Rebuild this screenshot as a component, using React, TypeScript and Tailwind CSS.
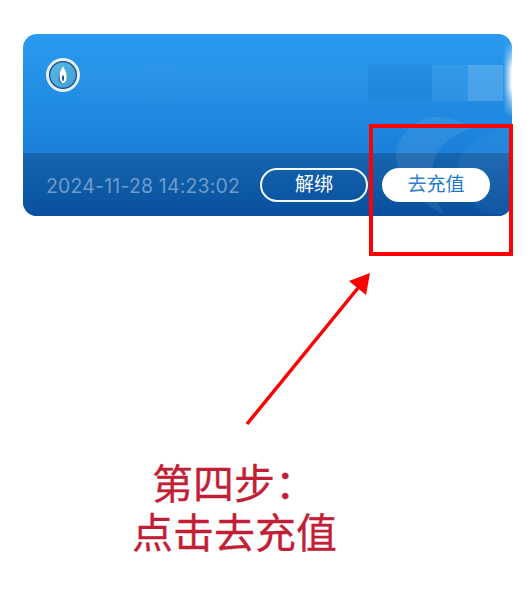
const cjk = "font-['Roboto','Noto_Sans_CJK_SC',sans-serif]";

const mosaic = [
  { w: "w-[65px]", bg: "bg-white/[0.02]" },
  { w: "w-[35px]", bg: "bg-white/[0.03]" },
  { w: "w-[190px]", bg: "bg-white/[0.02]" },
  { w: "w-[64px]", bg: "bg-black/[0.03]" },
  { w: "w-[36px]", bg: "bg-white/[0.06]" },
  { w: "w-[35px]", bg: "bg-white/[0.18]" },
];

const FlameBadge = () => (
  <svg viewBox="0 0 34 34" className="w-[34px] h-[34px] shrink-0">
    <defs>
      <linearGradient id="badge" x1="0" y1="0" x2="1" y2="1">
        <stop offset="0" stopColor="#5ab8e4" />
        <stop offset="1" stopColor="#3f9fd4" />
      </linearGradient>
    </defs>
    <circle cx="17" cy="17" r="17" fill="#e3f0fa" />
    <circle cx="17" cy="17" r="13.400" fill="url(#badge)" stroke="#1c4f86" strokeWidth="1.300" />
    <path d="M17 8c-1.800 3.800-3.800 6.500-3.600 11.500.1 3.200 1.700 5.500 3.600 5.500s3.500-2.300 3.600-5.500C20.800 14.500 18.800 11.800 17 8Z" fill="#ffffff" />
    <path d="M17 16.500c-.7 1.500-1.100 2.500-1 4 .1 1.500.5 2.800 1 2.800s.9-1.300 1-2.800c.1-1.500-.3-2.500-1-4Z" fill="#1c4f86" />
    <path d="M14.200 14.500c-1 2-1.700 3.800-1.500 6 .2 2.700 1.700 4.900 4.300 5.100-2-.8-3.200-2.800-3.400-5.300-.2-2 0-3.700.6-5.800Z" fill="#1c4f86" />
  </svg>
);

const Swoosh = () => (
  <svg viewBox="0 0 120 100" className="absolute right-0 bottom-0 w-[120px] h-[100px]">
    <path
      d="M35 1C15 10 4 25 4 40c0 22 22 46 48 58C42 84 38 60 42 45 46 30 62 17 82 12 66 3 50 0 35 1Z"
      fill="#ffffff"
      fillOpacity="0.08"
    />
    <path
      d="M111 11C88 20 68 32 66 48c-1 12 8 30 24 50h30V11Z"
      fill="#ffffff"
      fillOpacity="0.04"
    />
  </svg>
);

export default function App() {
  return (
    <div className={`relative w-[532px] h-[600px] bg-white overflow-hidden ${cjk}`}>
      <div className="pt-[34px] pl-[23px]">
        {/* Card */}
        <div className="relative w-[489px] h-[182px] rounded-[14px] overflow-hidden flex flex-col bg-[linear-gradient(180deg,#2a9bee_0%,#1272d0_100%)]">
          <div className="flex-1 flex items-start pt-[24px] pl-[23px]">
            <FlameBadge />
          </div>

          {/* blurred out account name */}
          <div className="absolute left-[55px] top-[31px] flex h-[36px]">
            {mosaic.map((m, i) => (
              <div key={i} className={`${m.w} ${m.bg}`} />
            ))}
          </div>
          <div className="absolute right-0 top-[8px] w-[9px] h-[76px] bg-[linear-gradient(90deg,rgba(255,255,255,0),#ffffff)] [mask-image:linear-gradient(180deg,transparent,#000_35%,#000_60%,transparent)]" />

          {/* Footer */}
          <div className="h-[63px] flex items-center pl-[23px] bg-[linear-gradient(180deg,#1765ae_0%,#07509f_100%)]">
            <span className="w-[214px] pt-[4px] font-['Inter','Noto_Sans_CJK_SC',sans-serif] text-[19.500px] tracking-[0.17px] leading-none text-[#6c9ccc] whitespace-nowrap">2024-11-28 14:23:02</span>
            <button className="w-[108px] h-[34px] rounded-full border-2 border-[#f2f7fc] text-white text-[19px] leading-none">
              解绑
            </button>
            <button className="ml-[14px] w-[108px] h-[34px] rounded-full bg-white text-[#1a78cc] text-[19px] leading-none">
              去充值
            </button>
          </div>
          <Swoosh />
        </div>
      </div>

      {/* Annotation */}
      <div className="absolute left-[369px] top-[124px] w-[144px] h-[132px] border-4 border-[#fb0007]" />
      <svg viewBox="0 0 532 600" className="absolute inset-0 w-[532px] h-[600px]">
        <line x1="247" y1="424" x2="358" y2="288" stroke="#fb0000" strokeWidth="3.500" />
        <polygon points="370,273 366,295 349,281" fill="#fb0000" />
      </svg>

      <div className="pt-[245px] pl-[132px] text-[41px] leading-[49px] text-[#c21f37] whitespace-nowrap [-webkit-text-stroke:0.3px_#c21f37]">
        <div className="pl-[20px]">第四步：</div>
        <div>点击去充值</div>
      </div>
    </div>
  );
}
